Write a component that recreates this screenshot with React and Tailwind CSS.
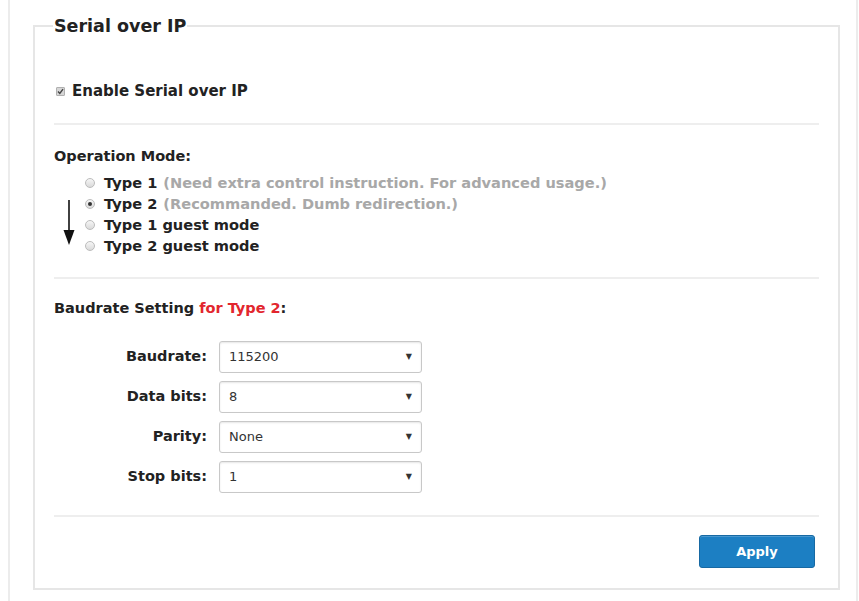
import React from "react";

const font = { fontFamily: '"DejaVu Sans", Verdana, sans-serif' };

function Radio({ checked }) {
  return (
    <span className="inline-flex items-center justify-center w-[10px] h-[10px] rounded-full border border-[#bcbcbc] bg-gradient-to-b from-[#f6f6f6] to-[#dadada] mr-[9px] shrink-0">
      {checked && <span className="w-[4px] h-[4px] rounded-full bg-[#333]" />}
    </span>
  );
}

function Select({ value }) {
  return (
    <div className="w-[203px] h-[32px] border border-[#c8c8c8] rounded-[3px] bg-white shadow-[inset_0_1px_2px_rgba(0,0,0,0.1)] flex items-center justify-between pl-[9px] pr-[9px]">
      <span className="text-[13px] text-[#333]">{value}</span>
      <span className="text-[8px] text-[#333]">▼</span>
    </div>
  );
}

export default function App() {
  const rows = [
    ["Baudrate:", "115200"],
    ["Data bits:", "8"],
    ["Parity:", "None"],
    ["Stop bits:", "1"],
  ];
  return (
    <div className="w-[859px] h-[601px] bg-white overflow-hidden" style={font}>
      <div className="ml-[8px] w-[850px] h-[601px] border-l-2 border-r-2 border-[#ececec] pt-[15px]">
        <fieldset className="ml-[23px] w-[804px] h-[575px] border-2 border-[#e6e6e6] px-[19px] relative">
          <legend className="text-[17.5px] leading-[22px] font-bold text-[#222] px-[1px] -ml-[1px]">Serial over IP</legend>
          <div className="h-[44px]" />
          <div className="flex items-center text-[15px] font-bold text-[#222] h-[20px]">
            <span className="w-[9px] h-[9px] mr-[7px] ml-[2px] flex items-center justify-center rounded-[1px] bg-[#d6d6d6] border border-[#b0b0b0]">
              <svg width="7" height="7" viewBox="0 0 7 7"><path d="M1 3.6 L2.8 5.4 L6 1.2" stroke="#444" strokeWidth="1.4" fill="none" /></svg>
            </span>
            Enable Serial over IP
          </div>
          <div className="mt-[22px] border-t-2 border-[#eeeeee] w-[765px]" />
          <div className="mt-[22px] text-[14.5px] font-bold text-[#222] h-[20px] flex items-center">Operation Mode:</div>
          <div className="ml-[31px] mt-[5px] flex flex-col text-[14.6px] font-bold text-[#222]">
            <div className="h-[21px] flex items-center whitespace-nowrap">
              <Radio />Type 1 <span className="ml-[6px] text-[#a8a8a8]">(Need extra control instruction. For advanced usage.)</span>
            </div>
            <div className="h-[21px] flex items-center whitespace-nowrap">
              <Radio checked />Type 2 <span className="ml-[6px] text-[#a8a8a8]">(Recommanded. Dumb redirection.)</span>
            </div>
            <div className="h-[21px] flex items-center">
              <Radio />Type 1 guest mode
            </div>
            <div className="h-[21px] flex items-center">
              <Radio />Type 2 guest mode
            </div>
          </div>
          <svg className="absolute left-[28px] top-[163px]" width="12" height="46" viewBox="0 0 12 46">
            <line x1="6" y1="0" x2="6" y2="34" stroke="#111" strokeWidth="1.6" />
            <polygon points="0.5,30 11.5,30 6,45" fill="#111" />
          </svg>
          <div className="mt-[21px] border-t-2 border-[#eeeeee] w-[765px]" />
          <div className="mt-[20px] text-[14.5px] font-bold text-[#222] h-[20px] flex items-center whitespace-nowrap">
            Baudrate Setting&nbsp;<span className="text-[#e2262e]">for Type 2</span>:
          </div>
          <div className="mt-[22px] flex flex-col gap-[8px]">
            {rows.map(([l, v]) => (
              <div key={l} className="flex items-center">
                <div className="w-[153px] text-right text-[14.5px] font-bold text-[#222] whitespace-nowrap">{l}</div>
                <div className="ml-[12px]"><Select value={v} /></div>
              </div>
            ))}
          </div>
          <div className="mt-[22px] border-t-2 border-[#eeeeee] w-[765px]" />
          <div className="mt-[18px] w-[765px] flex justify-end pr-[4px]">
            <button className="w-[116px] h-[33px] rounded-[3px] bg-[#1c7fc3] border border-[#1769a3] text-white text-[13px] font-bold shadow-[inset_0_1px_0_rgba(255,255,255,0.2)]">
              Apply
            </button>
          </div>
        </fieldset>
      </div>
    </div>
  );
}
